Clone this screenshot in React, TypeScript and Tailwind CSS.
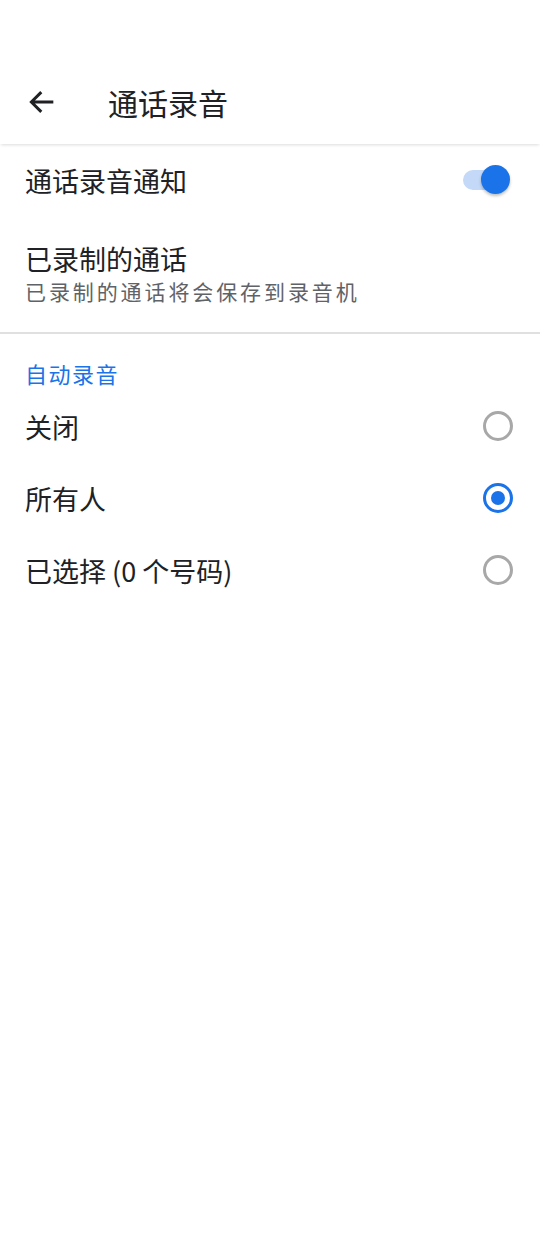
import { FC } from 'react';

const FONT = { fontFamily: '"Noto Sans CJK SC", "Noto Sans", Roboto, sans-serif' };

const options = [
  { id: 1, label: '关闭', checked: false },
  { id: 2, label: '所有人', checked: true },
  { id: 3, label: '已选择 (0 个号码)', checked: false },
];

const Radio: FC<{ checked: boolean }> = ({ checked }) =>
  checked ? (
    <div className="flex h-[30px] w-[30px] items-center justify-center rounded-full border-[3px] border-[#1a73e8]">
      <div className="h-[14px] w-[14px] rounded-full bg-[#1a73e8]" />
    </div>
  ) : (
    <div className="h-[30px] w-[30px] rounded-full border-[3px] border-[#a8a8a8]" />
  );

export default function App() {
  return (
    <div className="flex h-[1260px] w-[540px] flex-col bg-white text-[#202124]" style={FONT}>
      <div className="h-[60px] flex-none" />

      <header className="flex h-[84px] flex-none items-center shadow-[0_2px_3px_-1px_rgba(0,0,0,0.14)]">
        <div className="flex w-[108px] flex-none items-center pl-[25px]">
          <svg width="34" height="34" viewBox="0 0 24 24" fill="none" stroke="#202124" strokeWidth="2.1">
            <path d="M20 12H4.5M11.5 5l-7 7 7 7" />
          </svg>
        </div>
        <h1 className="text-[30px] leading-none font-normal">通话录音</h1>
      </header>

      <div className="flex h-[72px] flex-none items-center justify-between pr-[35px] pl-[25px]">
        <span className="text-[27px] leading-none">通话录音通知</span>
        <div className="relative h-[20px] w-[42px] rounded-full bg-[#c3d9f7]">
          <div className="absolute top-[-5px] right-[-5px] h-[29px] w-[29px] rounded-full bg-[#1a73e8] shadow-[0_2px_3px_rgba(0,0,0,0.25)]" />
        </div>
      </div>

      <div className="flex h-[118px] flex-none flex-col justify-center gap-[9px] border-b-2 border-[#e0e0e0] pb-[2px] pl-[25px]">
        <span className="text-[27px] leading-none">已录制的通话</span>
        <span className="text-[21px] leading-none tracking-[2.9px] text-[#5f6368]">已录制的通话将会保存到录音机</span>
      </div>

      <div className="flex h-[56px] flex-none items-end pl-[25px] pb-[6px]">
        <span className="text-[22px] leading-none tracking-[1.5px] text-[#1a73e8]">自动录音</span>
      </div>

      {options.map((opt) => (
        <div key={opt.id} className="flex h-[72px] flex-none items-center justify-between pr-[27px] pl-[25px]">
          <span className="text-[27px] leading-none">{opt.label}</span>
          <Radio checked={opt.checked} />
        </div>
      ))}
    </div>
  );
}
